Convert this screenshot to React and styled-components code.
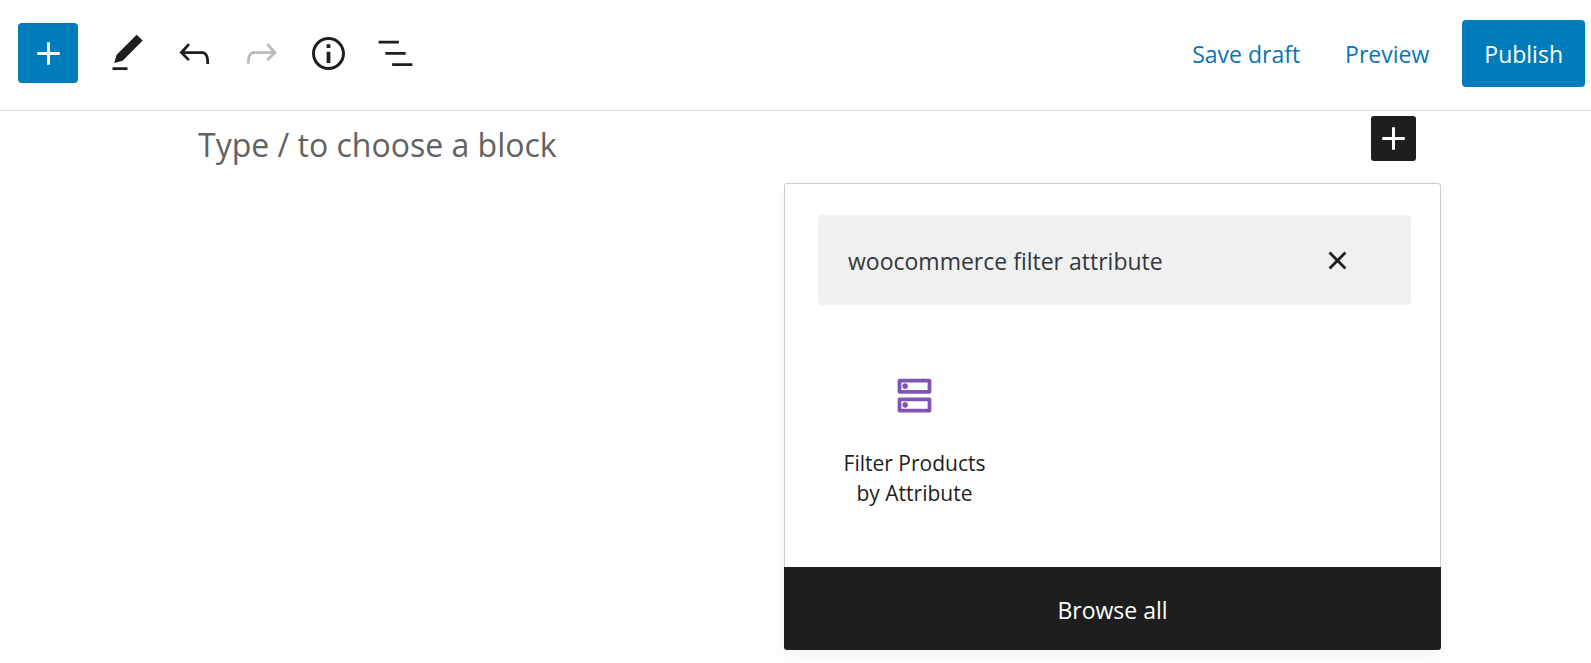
/* eslint-disable react/prop-types */
import { useState } from "react";
import styled, { createGlobalStyle } from "styled-components";

const colors = {
	primary: "#007cba",
	link: "#0a75b5",
	dark: "#1e1e1e",
	placeholder: "#626262",
	border: "#e0e0e0",
	popoverBorder: "#cccccc",
	field: "#f0f0f0",
	woo: "#7f54b3",
};

const paths = {
	plus: "M18 11.2h-5.2V6h-1.6v5.2H6v1.6h5.2V18h1.6v-5.2H18z",
	edit: "M20.1 5.1L16.9 2 6.2 12.7l-1.3 4.4 4.5-1.3L20.1 5.1zM4 20.8h8v-1.5H4v1.5z",
	undo: "M18.3 11.7c-.6-.6-1.4-.9-2.3-.9H6.7l2.9-3.3-1.1-1-4.5 5L8.5 16l1-1-2.7-2.7H16c.5 0 .9.2 1.3.5 1 1 1 3.4 1 4.5v.3h1.5v-.2c0-1.5 0-4.3-1.5-5.7z",
	redo: "M15.6 6.5l-1.1 1 2.9 3.3H8c-.9 0-1.7.3-2.3.9-1.4 1.5-1.4 4.2-1.4 5.6v.2h1.5v-.3c0-1.1 0-3.5 1-4.5.3-.3.7-.5 1.3-.5h9.2L14.5 15l1.1 1.1 4.6-4.6-4.6-5z",
	info: "M12 3.2c-4.8 0-8.8 3.9-8.8 8.8 0 4.8 3.9 8.8 8.8 8.8 4.8 0 8.8-3.9 8.8-8.8 0-4.8-4-8.8-8.8-8.8zm0 16c-4 0-7.2-3.3-7.2-7.2C4.8 8 8 4.8 12 4.8s7.2 3.3 7.2 7.2c0 4-3.2 7.2-7.2 7.2zM11 17h2v-6h-2v6zm0-8h2V7h-2v2z",
	outline: "M13.8 5.2H3v1.5h10.8V5.2zm-3.6 12v1.5H21v-1.5H10.2zm7.2-6H6.6v1.5h10.8v-1.5z",
	close: "M12 13.06l3.712 3.713 1.061-1.06L13.061 12l3.712-3.712-1.06-1.06L12 10.938 8.288 7.227l-1.061 1.06L10.939 12l-3.712 3.712 1.06 1.061L12 13.061z",
	filter: "M19 15v4H5v-4h14m1-2H4c-.55 0-1 .45-1 1v6c0 .55.45 1 1 1h16c.55 0 1-.45 1-1v-6c0-.55-.45-1-1-1zM7 18.5c-.82 0-1.5-.67-1.5-1.5s.68-1.5 1.5-1.5 1.5.67 1.5 1.5-.67 1.5-1.5 1.5zM19 5v4H5V5h14m1-2H4c-.55 0-1 .45-1 1v6c0 .55.45 1 1 1h16c.55 0 1-.45 1-1V4c0-.55-.45-1-1-1zM7 8.5c-.82 0-1.5-.67-1.5-1.5S6.18 5.5 7 5.5s1.5.68 1.5 1.5S7.83 8.5 7 8.5z",
};

const tools = [
	{ title: "Edit", icon: "edit" },
	{ title: "Undo", icon: "undo" },
	{ title: "Redo", icon: "redo", disabled: true },
	{ title: "Details", icon: "info" },
	{ title: "List view", icon: "outline" },
];

const blocks = [{ title: "Filter Products by Attribute", icon: "filter" }];

const GlobalStyle = createGlobalStyle`
	*, *::before, *::after {
		box-sizing: border-box;
	}

	body {
		margin: 0;
		background: #fff;
		color: ${colors.dark};
		font-family: "Open Sans", "Noto Sans", sans-serif;
	}

	button, input {
		margin: 0;
		padding: 0;
		border: 0;
		font: inherit;
		color: inherit;
		background: none;
	}

	button {
		cursor: pointer;
	}
`;

const Svg = styled.svg`
	display: block;
	flex: none;
	width: 45px;
	height: 45px;
	fill: currentColor;
`;

const Header = styled.header`
	display: flex;
	align-items: center;
	justify-content: space-between;
	padding: 20px 6px 23px 18px;
	border-bottom: 1px solid ${colors.border};
`;

const Toolbar = styled.div`
	display: flex;
	align-items: center;
	gap: 7px;
	padding-bottom: 1px;
`;

const ToolButton = styled.button`
	display: flex;
	align-items: center;
	justify-content: center;
	width: 60px;
	height: 60px;

	&:disabled {
		color: #bbb;
		cursor: default;
	}
`;

const InserterButton = styled(ToolButton)`
	margin-right: 12px;
	border-radius: 4px;
	background: ${colors.primary};
	color: #fff;
`;

const Actions = styled.div`
	display: flex;
	align-items: center;
	gap: 21px;
	font-size: 23px;
	line-height: 32px;
`;

const TextButton = styled.button`
	padding: 0 12px;
	color: ${colors.link};
`;

const PublishButton = styled.button`
	height: 67px;
	padding: 0 22px;
	border-radius: 4px;
	background: ${colors.primary};
	color: #fff;
`;

const Canvas = styled.main`
	display: flex;
	flex-direction: column;
	padding: 5px 150px 14px 198px;
`;

const BlockRow = styled.div`
	display: flex;
	align-items: flex-start;
	justify-content: space-between;
	height: 67px;
	padding-right: 25px;
`;

const BlockInput = styled.input`
	flex: 1;
	min-width: 0;
	height: 56px;
	font-size: 32px;
	outline: none;

	&::placeholder {
		color: ${colors.placeholder};
		opacity: 1;
	}
`;

const AddButton = styled.button`
	display: flex;
	align-items: center;
	justify-content: center;
	width: 45px;
	height: 45px;
	border-radius: 3px;
	background: ${colors.dark};
	color: #fff;
`;

const Dropdown = styled.section`
	display: flex;
	flex-direction: column;
	align-self: flex-end;
	width: 100%;
	max-width: 657px;
	border-radius: 3px;
	background: #fff;
	box-shadow: 0 6px 20px rgba(0, 0, 0, 0.05);
	overflow: hidden;
`;

const DropdownBody = styled.div`
	padding: 31px 29px 0 33px;
	border: 1px solid ${colors.popoverBorder};
	border-bottom: 0;
	border-radius: 3px 3px 0 0;
`;

const SearchBox = styled.div`
	display: flex;
	align-items: center;
	height: 90px;
	padding: 0 51px 0 30px;
	border-radius: 4px;
	background: ${colors.field};
`;

const SearchInput = styled.input`
	flex: 1;
	min-width: 0;
	height: 60px;
	padding-top: 2px;
	font-size: 23px;
	color: #32373c;
	outline: none;
`;

const BlockGrid = styled.div`
	display: grid;
	grid-template-columns: repeat(3, 1fr);
	padding: 50px 14px 41px 0;
`;

const BlockButton = styled.button`
	display: flex;
	flex-direction: column;
	align-items: center;
	gap: 30px;
	padding: 18px 20px;
	font-size: 21px;
	line-height: 30px;
	text-align: center;

	svg {
		color: ${colors.woo};
	}
`;

const BrowseButton = styled.button`
	height: 83px;
	padding-top: 2px;
	background: ${colors.dark};
	color: #fff;
	font-size: 23px;
`;

const Icon = ({ name }) => (
	<Svg viewBox='0 0 24 24' aria-hidden='true'>
		<path d={paths[name]} />
	</Svg>
);

const QuickInserter = () => {
	const [query, setQuery] = useState("woocommerce filter attribute");

	return (
		<Dropdown>
			<DropdownBody>
				<SearchBox>
					<SearchInput
						aria-label='Search for a block'
						value={query}
						onChange={(e) => setQuery(e.target.value)}
					/>
					<button aria-label='Reset search' onClick={() => setQuery("")}>
						<Icon name='close' />
					</button>
				</SearchBox>
				<BlockGrid>
					{blocks.map((block) => (
						<BlockButton key={block.title}>
							<Icon name={block.icon} />
							<span>{block.title}</span>
						</BlockButton>
					))}
				</BlockGrid>
			</DropdownBody>
			<BrowseButton>Browse all</BrowseButton>
		</Dropdown>
	);
};

const App = () => {
	const [isOpen, setIsOpen] = useState(true);

	return (
		<>
			<GlobalStyle />
			<Header>
				<Toolbar>
					<InserterButton aria-label='Add block'>
						<Icon name='plus' />
					</InserterButton>
					{tools.map((tool) => (
						<ToolButton key={tool.title} aria-label={tool.title} disabled={tool.disabled}>
							<Icon name={tool.icon} />
						</ToolButton>
					))}
				</Toolbar>
				<Actions>
					<TextButton>Save draft</TextButton>
					<TextButton>Preview</TextButton>
					<PublishButton>Publish</PublishButton>
				</Actions>
			</Header>
			<Canvas>
				<BlockRow>
					<BlockInput aria-label='Empty block' placeholder='Type / to choose a block' />
					<AddButton aria-label='Add block' onClick={() => setIsOpen(!isOpen)}>
						<Icon name='plus' />
					</AddButton>
				</BlockRow>
				{isOpen && <QuickInserter />}
			</Canvas>
		</>
	);
};

export default App;
